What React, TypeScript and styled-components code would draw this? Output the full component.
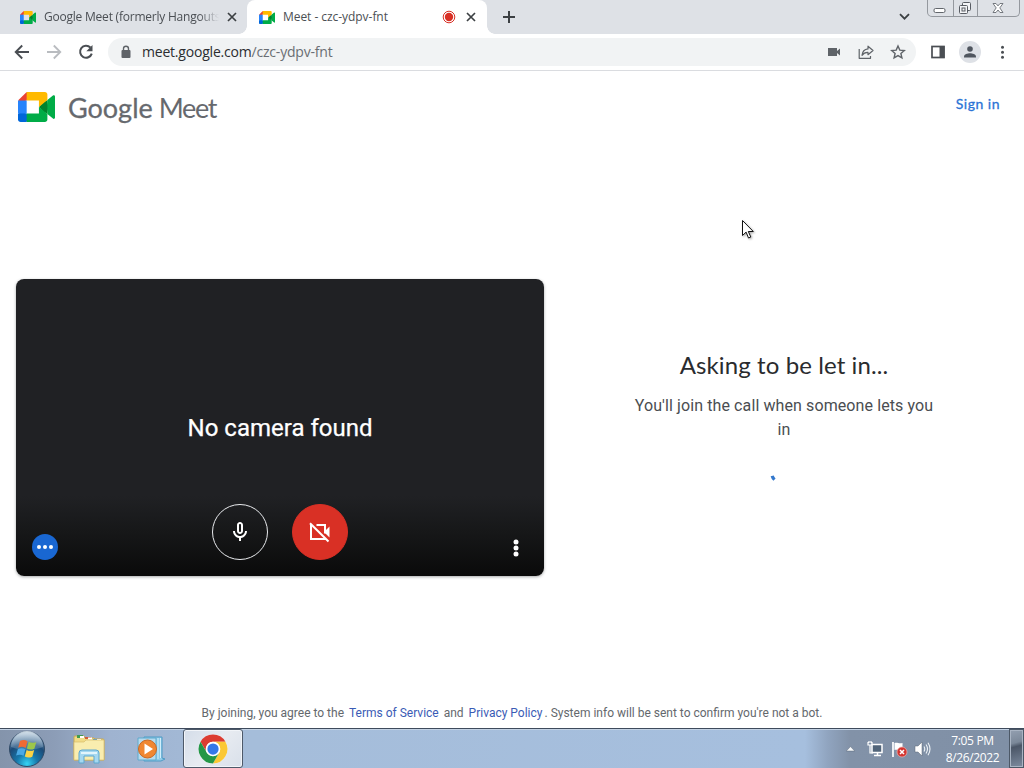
import React from "react";
import styled, { createGlobalStyle } from "styled-components";

const GlobalStyle = createGlobalStyle`
  * { box-sizing: border-box; }
  html, body { margin: 0; padding: 0; overflow: hidden; background: #fff; }
  svg { display: block; flex: none; }
`;

const uiFont = `"Open Sans", "Noto Sans", sans-serif`;
const brandFont = `Lato, "Open Sans", sans-serif`;
const bodyFont = `Roboto, "Liberation Sans", sans-serif`;

const Screen = styled.div`
  position: relative;
  width: 1024px;
  height: 768px;
  display: flex;
  flex-direction: column;
  overflow: hidden;
  background: #fff;
`;

/* ---------- tab strip ---------- */
const TabStrip = styled.div`
  height: 34px;
  display: flex;
  background: #dee1e6;
  font: 12px ${uiFont};
  color: #4b4f54;
`;
const Tab = styled.div<{ $active?: boolean }>`
  position: relative;
  width: ${(p) => (p.$active ? 240 : 247)}px;
  height: 34px;
  padding: 0 ${(p) => (p.$active ? 11 : 10)}px 0 ${(p) => (p.$active ? 12 : 20)}px;
  display: flex;
  align-items: center;
  background: ${(p) => (p.$active ? "#fff" : "transparent")};
  border-radius: ${(p) => (p.$active ? "8px 8px 0 0" : "0")};
  &::before, &::after {
    content: "";
    display: ${(p) => (p.$active ? "block" : "none")};
    position: absolute;
    bottom: 0;
    width: 8px;
    height: 8px;
  }
  &::before { left: -8px; background: radial-gradient(circle at 0 0, transparent 7.5px, #fff 8px); }
  &::after { right: -8px; background: radial-gradient(circle at 100% 0, transparent 7.5px, #fff 8px); }
`;
const TabTitle = styled.span<{ $fade?: boolean; $spacing: number }>`
  flex: 1;
  margin-left: 8px;
  overflow: hidden;
  white-space: nowrap;
  line-height: 18px;
  letter-spacing: ${(p) => p.$spacing}px;
  ${(p) => p.$fade && "mask-image: linear-gradient(90deg, #000 155px, transparent 175px);"}
`;
const TabClose = styled.span<{ $gap: number }>`
  margin-left: ${(p) => p.$gap}px;
`;
const NewTab = styled.div`
  flex: 1;
  padding: 10px 0 0 15px;
`;
const Chevron = styled.div`
  padding: 13px 17px 0 0;
`;
const WindowButtons = styled.div`
  width: 93px;
  height: 17px;
  margin-right: 4px;
  display: flex;
  border: 1px solid #94989e;
  border-top: 0;
  border-radius: 0 0 5px 5px;
`;
const WindowButton = styled.div<{ $w: number }>`
  width: ${(p) => p.$w}px;
  padding-right: 1px;
  display: flex;
  justify-content: center;
  & + & { border-left: 1px solid #94989e; }
`;

/* ---------- toolbar ---------- */
const Toolbar = styled.div`
  height: 37px;
  display: flex;
  align-items: center;
  padding: 0 0 1px 14px;
  border-bottom: 1px solid #dadce0;
`;
const NavButton = styled.div`
  width: 32px;
  svg { width: 16px; height: 16px; }
`;
const AddressBar = styled.div`
  width: 808px;
  height: 28px;
  margin-left: -2px;
  border-radius: 14px;
  background: #f1f3f4;
  display: flex;
  align-items: center;
  padding: 0 10px 0 12px;
  font: 14px ${uiFont};
  color: #6a6e73;
`;
const Url = styled.div`
  flex: 1;
  margin-left: 10px;
  letter-spacing: -0.2px;
  line-height: 20px;
  b { font-weight: 400; color: #2b2d30; }
`;
const AddressActions = styled.div`
  display: flex;
  gap: 16px;
`;
const ToolbarEnd = styled.div`
  display: flex;
  align-items: center;
  gap: 13px;
  padding-left: 14px;
`;
const Avatar = styled.div`
  width: 22px;
  height: 22px;
  border-radius: 50%;
  background: #dee1e6;
  display: grid;
  place-items: center;
`;

/* ---------- page ---------- */
const Page = styled.div`
  height: 657px;
  display: flex;
  flex-direction: column;
  background: #fff;
`;
const Header = styled.header`
  height: 72px;
  display: flex;
  align-items: center;
  padding: 0 24px 0 18px;
  font-family: ${brandFont};
`;
const Wordmark = styled.div`
  flex: 1;
  margin: 2px 0 0 13px;
  font-size: 27px;
  line-height: 32px;
  color: #66696e;
  white-space: nowrap;
`;
const Google = styled.span`
  -webkit-text-stroke: 0.3px #66696e;
`;
const Meet = styled.span`
  margin-left: 6px;
  letter-spacing: -1.4px;
`;
const SignIn = styled.a`
  font-size: 14px;
  font-weight: 400;
  line-height: 20px;
  letter-spacing: 0.5px;
  -webkit-text-stroke: 0.3px #2b73d6;
  margin-bottom: 6px;
  color: #2b73d6;
`;
const Lobby = styled.main`
  height: 297px;
  margin-top: 136px;
  padding: 0 16px;
  display: flex;
`;
const Preview = styled.section`
  width: 528px;
  height: 297px;
  border-radius: 8px;
  background: linear-gradient(180deg, #202124 0, #202124 217px, #161718 254px, #0a0a0a 297px);
  box-shadow: 0 1px 3px rgba(60, 64, 67, 0.45);
  display: flex;
  flex-direction: column;
  justify-content: space-between;
`;
const PreviewMessage = styled.div`
  padding-top: 133px;
  text-align: center;
  font: 400 24px/32px ${bodyFont};
  -webkit-text-stroke: 0.25px #fff;
  color: #fff;
`;
const Controls = styled.div`
  display: flex;
  align-items: flex-end;
  justify-content: space-between;
  padding: 0 16px 16px;
`;
const CallButtons = styled.div`
  display: flex;
  gap: 24px;
`;
const RoundButton = styled.div<{ $off?: boolean }>`
  width: 56px;
  height: 56px;
  border-radius: 50%;
  border: 1px solid ${(p) => (p.$off ? "#d93025" : "#e8eaed")};
  background: ${(p) => (p.$off ? "#d93025" : "transparent")};
  display: grid;
  place-items: center;
`;
const EffectsBadge = styled.div`
  width: 26px;
  height: 26px;
  border-radius: 50%;
  background: #1967d2;
  display: grid;
  place-items: center;
`;
const MoreOptions = styled.div`
  width: 26px;
  padding-right: 2px;
  margin-right: -2px;
  margin-left: 2px;
  display: grid;
  place-items: center;
`;
const Waiting = styled.section`
  width: 304px;
  margin-left: 88px;
  padding-top: 70px;
  display: flex;
  flex-direction: column;
  align-items: center;
  text-align: center;
`;
const WaitingTitle = styled.h1`
  margin: 0;
  font: 400 24px/32px ${brandFont};
  letter-spacing: 0.1px;
  color: #2a2b2e;
  white-space: nowrap;
`;
const WaitingText = styled.p`
  margin: 13px 0 0;
  font: 400 16px/24px ${bodyFont};
  letter-spacing: 0.1px;
  color: #4a4d51;
`;
const Spinner = styled.div`
  margin: 32px 22px 0 0;
`;
const Legal = styled.footer`
  margin-top: 129px;
  text-align: center;
  font: 400 12px/16px ${bodyFont};
  color: #64686d;
  white-space: nowrap;
`;
const LegalLink = styled.a`
  margin: 0 2px;
  color: #3a5bb5;
`;
const Pointer = styled.div`
  position: absolute;
  left: 741px;
  top: 219px;
  svg { filter: drop-shadow(1px 1px 1px rgba(0, 0, 0, 0.35)); }
`;

/* ---------- taskbar ---------- */
const Taskbar = styled.div`
  height: 40px;
  display: flex;
  align-items: center;
  border-top: 1px solid #3e4a5c;
  box-shadow: inset 0 1px 0 #c3d2e4;
  background: linear-gradient(90deg, #8494ab 0, #8c9db7 55px, #9fb3d0 110px, #a5bdda 250px, #a6bfde 805px, #90a4bf 828px, #8292a8 850px, #8090a6 1010px);
`;
const TaskItem = styled.div<{ $w: number; $open?: boolean; $trail?: number }>`
  width: ${(p) => p.$w}px;
  height: 39px;
  padding-right: ${(p) => p.$trail ?? 0}px;
  display: grid;
  place-items: center;
  border: ${(p) => (p.$open ? "1px solid #4d5969" : "0")};
  border-radius: 3px;
  background: ${(p) => (p.$open ? "linear-gradient(135deg, #d4dde9, #e7ebf1 50%, #d9e0ea)" : "transparent")};
  box-shadow: ${(p) => (p.$open ? "inset 0 0 0 1px #f2f5f9" : "none")};
`;
const Tray = styled.div`
  margin-left: auto;
  display: flex;
  align-items: center;
`;
const TrayIcon = styled.div<{ $gap: number }>`
  margin-right: ${(p) => p.$gap}px;
`;
const Clock = styled.div`
  width: 73px;
  text-align: center;
  font: 12px/17px ${uiFont};
  letter-spacing: -0.35px;
  color: #fff;
`;
const ShowDesktop = styled.div`
  width: 15px;
  height: 39px;
  border: 1px solid #4c5867;
  background: linear-gradient(165deg, #94a0b1, #7b8899 35%, #4b5667 45%, #7d8b9f);
  box-shadow: inset 0 0 0 1px #a9b4c3;
`;

const MeetLogo = ({ w, h }: { w: number; h: number }) => (
  <svg width={w} height={h} viewBox="0 0 87.5 72" preserveAspectRatio="none">
    <path fill="#00832d" d="M49.5 36l8.53 9.75 11.47 7.33 2-17.02-2-16.64-11.69 6.44z" />
    <path fill="#0066da" d="M0 51.5V66c0 3.315 2.685 6 6 6h14.5l3-10.96-3-9.54-9.95-3z" />
    <path fill="#e94235" d="M20.5 0L0 20.5l10.55 3 9.95-3 2.95-9.41z" />
    <path fill="#2684fc" d="M20.5 20.5H0v31h20.5z" />
    <path fill="#00ac47" d="M82.6 8.68L69.5 19.42v33.66l13.16 10.79c1.97 1.54 4.85.135 4.85-2.37V11c0-2.535-2.945-3.925-4.91-2.32zM49.5 36v15.5h-29V72h43c3.315 0 6-2.685 6-6V53.08z" />
    <path fill="#ffba00" d="M63.5 0h-43v20.5h29V36l20-16.57V6c0-3.315-2.685-6-6-6z" />
  </svg>
);

const CloseIcon = () => (
  <svg width="10" height="10" viewBox="0 0 10 10" fill="none" stroke="#3c4043" strokeWidth="1.7">
    <path d="M1 1l8 8M9 1l-8 8" />
  </svg>
);

const RecordingIcon = () => (
  <svg width="14" height="14" viewBox="0 0 14 14">
    <circle cx="7" cy="7" r="5.8" fill="none" stroke="#d93025" strokeWidth="1" />
    <circle cx="7" cy="7" r="4.2" fill="#d93025" />
  </svg>
);

const ChromeTabs = () => (
  <TabStrip>
    <Tab>
      <MeetLogo w={16} h={13} />
      <TabTitle $fade $spacing={-0.22}>Google Meet (formerly Hangouts</TabTitle>
      <TabClose $gap={3}><CloseIcon /></TabClose>
    </Tab>
    <Tab $active>
      <MeetLogo w={16} h={13} />
      <TabTitle $spacing={-0.05}>Meet - czc-ydpv-fnt</TabTitle>
      <RecordingIcon />
      <TabClose $gap={10}><CloseIcon /></TabClose>
    </Tab>
    <NewTab>
      <svg width="14" height="14" viewBox="0 0 14 14" stroke="#3c4043" strokeWidth="2"><path d="M7 1v12M1 7h12" /></svg>
    </NewTab>
    <Chevron>
      <svg width="11" height="8" viewBox="0 0 11 8" fill="none" stroke="#3c4043" strokeWidth="1.8"><path d="M1 1.2l4.5 4.5L10 1.2" /></svg>
    </Chevron>
    <WindowButtons>
      <WindowButton $w={25}>
        <svg width="13" height="15" viewBox="0 0 13 15"><rect x="1" y="8.5" width="11" height="4" rx="1.5" fill="#fff" stroke="#62666c" /></svg>
      </WindowButton>
      <WindowButton $w={25}>
        <svg width="14" height="16" viewBox="0 0 14 16" fill="#f4f5f7" stroke="#585c63">
          <rect x="4.5" y="2.5" width="8" height="8" rx="1" />
          <rect x="1.5" y="5.5" width="8" height="8" rx="1" />
          <rect x="4" y="8" width="3" height="3" />
        </svg>
      </WindowButton>
      <WindowButton $w={42}>
        <svg width="12" height="15" viewBox="0 0 12 15">
          <path d="M1 3.5h3l2 2.4 2-2.4h3L7.8 7.9l3.2 4.6H8L6 10l-2 2.5H1l3.2-4.6z" fill="#fff" stroke="#686c73" strokeWidth=".9" />
        </svg>
      </WindowButton>
    </WindowButtons>
  </TabStrip>
);

const ChromeToolbar = () => (
  <Toolbar>
    <NavButton>
      <svg viewBox="0 0 16 16" fill="none" stroke="#4a4e53" strokeWidth="1.9"><path d="M15 8H2M8.2 1.5L1.7 8l6.5 6.5" /></svg>
    </NavButton>
    <NavButton>
      <svg viewBox="0 0 16 16" fill="none" stroke="#b9bcc0" strokeWidth="1.8"><path d="M1 8h13M7.8 1.5L14.3 8l-6.5 6.5" /></svg>
    </NavButton>
    <NavButton>
      <svg viewBox="0 0 16 16"><path d="M12.4 3.5A6 6 0 1 0 13.8 9.6" fill="none" stroke="#4a4e53" strokeWidth="2" /><path d="M14.5 1v6.2H8.3z" fill="#4a4e53" /></svg>
    </NavButton>
    <AddressBar>
      <svg width="12" height="14" viewBox="0 0 12 14"><rect x="1.5" y="5" width="9" height="8" rx="1" fill="#5f6368" /><path d="M3.5 5.5V3.7a2.5 2.5 0 0 1 5 0v1.8" fill="none" stroke="#5f6368" strokeWidth="1.4" /></svg>
      <Url><b>meet.google.com</b>/czc-ydpv-fnt</Url>
      <AddressActions>
        <svg width="16" height="16" viewBox="0 0 16 16"><path d="M2 4h9v3l3-2.6v7.2L11 9v3H2z" fill="#5f6368" /></svg>
        <svg width="16" height="16" viewBox="0 0 16 16" fill="none" stroke="#5f6368" strokeWidth="1.2" strokeLinejoin="round"><path d="M1.2 5v9.3h11.3V12M10 2.2l5 4.3-5 4.2V8.4C7.2 8.3 5.5 9.2 4 11.3c.4-3.6 2.4-6 6-6.4z" /></svg>
        <svg width="16" height="16" viewBox="0 0 16 16" fill="none" stroke="#5f6368" strokeWidth="1.4"><path d="M8 2l1.8 4.1 4.5.4-3.4 3 1 4.4L8 11.6l-3.9 2.3 1-4.4-3.4-3 4.5-.4z" /></svg>
      </AddressActions>
    </AddressBar>
    <ToolbarEnd>
      <svg width="16" height="16" viewBox="0 0 16 16"><rect x="2" y="2.5" width="12" height="11" fill="none" stroke="#4a4e53" strokeWidth="1.7" /><path d="M9.5 2h5v12h-5z" fill="#4a4e53" /></svg>
      <Avatar>
        <svg width="14" height="14" viewBox="0 0 14 14" fill="#50565f"><circle cx="7" cy="4" r="2.8" /><path d="M1 12.6v-1.2C1 9.3 4.6 8.2 7 8.2s6 1.1 6 3.2v1.2z" /></svg>
      </Avatar>
      <svg width="16" height="16" viewBox="0 0 16 16" fill="#4a4e53"><circle cx="8.5" cy="3.2" r="1.5" /><circle cx="8.5" cy="8.2" r="1.5" /><circle cx="8.5" cy="13.2" r="1.5" /></svg>
    </ToolbarEnd>
  </Toolbar>
);

const MeetPage = () => (
  <Page>
    <Header>
      <MeetLogo w={37} h={30} />
      <Wordmark><Google>Google</Google><Meet>Meet</Meet></Wordmark>
      <SignIn>Sign in</SignIn>
    </Header>
    <Lobby>
      <Preview>
        <PreviewMessage>No camera found</PreviewMessage>
        <Controls>
          <EffectsBadge>
            <svg width="16" height="4" viewBox="0 0 16 4" fill="#fff"><circle cx="2" cy="2" r="2" /><circle cx="8" cy="2" r="2" /><circle cx="14" cy="2" r="2" /></svg>
          </EffectsBadge>
          <CallButtons>
            <RoundButton>
              <svg width="24" height="24" viewBox="0 0 24 24" fill="#fff"><path d="M12 14c1.66 0 3-1.34 3-3V5c0-1.66-1.34-3-3-3S9 3.34 9 5v6c0 1.66 1.34 3 3 3zm-1-9c0-.55.45-1 1-1s1 .45 1 1v6c0 .55-.45 1-1 1s-1-.45-1-1V5zm6 6c0 2.76-2.24 5-5 5s-5-2.24-5-5H5c0 3.53 2.61 6.43 6 6.92V21h2v-3.08c3.39-.49 6-3.39 6-6.92h-2z" /></svg>
            </RoundButton>
            <RoundButton $off>
              <svg width="24" height="24" viewBox="0 0 24 24" fill="none" stroke="#fff" strokeWidth="2"><path d="M8.5 5H17v8.5M3 5v14h14.5M2 3.3L20.5 21.5" /><path d="M17 11l4.5-4.5v11L17 13z" fill="#fff" stroke="none" /></svg>
            </RoundButton>
          </CallButtons>
          <MoreOptions>
            <svg width="6" height="24" viewBox="0 0 6 24" fill="#fff"><circle cx="3" cy="6" r="2.5" /><circle cx="3" cy="12" r="2.5" /><circle cx="3" cy="18" r="2.5" /></svg>
          </MoreOptions>
        </Controls>
      </Preview>
      <Waiting>
        <WaitingTitle>Asking to be let in...</WaitingTitle>
        <WaitingText>You'll join the call when someone lets you in</WaitingText>
        <Spinner><svg width="8" height="8" viewBox="0 0 8 8"><path d="M3.2 1.8c.3 1.3 1 2.6 2.3 3.8" fill="none" stroke="#3478cc" strokeWidth="3.2" /></svg></Spinner>
      </Waiting>
    </Lobby>
    <Legal>
      By joining, you agree to the <LegalLink>Terms of Service</LegalLink> and <LegalLink>Privacy Policy</LegalLink>. System info will be sent to confirm you're not a bot.
    </Legal>
  </Page>
);

const StartOrb = () => (
  <svg width="38" height="38" viewBox="0 0 38 38">
    <defs>
      <radialGradient id="orb" cx=".5" cy=".92" r=".85"><stop offset="0" stopColor="#35d4f4" /><stop offset=".35" stopColor="#1778ab" /><stop offset=".7" stopColor="#1c4b78" /><stop offset="1" stopColor="#7897b3" /></radialGradient>
      <linearGradient id="gloss" x2="0" y2="1"><stop offset="0" stopColor="#e5eef5" stopOpacity=".85" /><stop offset="1" stopColor="#a9c1d6" stopOpacity=".2" /></linearGradient>
    </defs>
    <circle cx="19" cy="19" r="17.5" fill="url(#orb)" stroke="#304a66" />
    <path d="M3 17a16 16 0 0 1 32 0c-10 4-22 4-32 0z" fill="url(#gloss)" />
    <path d="M12 11c3-1.5 5-1.2 7.5.2L17.7 18c-2.5-1.4-4.7-1.5-7.5-.3z" fill="#ef6a34" />
    <path d="M20.7 11.8c2.5 1.3 5 1.2 7.6.1L26.4 18.7c-2.6 1.2-5 1.1-7.5-.1z" fill="#9cc64a" />
    <path d="M9.9 19c2.8-1.2 5-1.1 7.5.2l-1.8 6.6c-2.5-1.4-4.8-1.5-7.5-.2z" fill="#4aa9e4" />
    <path d="M18.6 19.9c2.5 1.3 5 1.2 7.6.1l-1.9 6.7c-2.6 1.2-5 1.2-7.5-.1z" fill="#fbd345" />
  </svg>
);

const FolderIcon = () => (
  <svg width="34" height="32" viewBox="0 0 34 32">
    <path d="M2 4q0-1 1-1h9l1 2h9l1 1h8q1 0 1 1v20H2z" fill="#f1db86" stroke="#c7a955" />
    <path d="M5 2h6v3H5z" fill="#3f9b50" /><path d="M13 4h6v2h-6z" fill="#d05c3a" /><path d="M21 6h7v2h-7z" fill="#4c97cc" />
    <path d="M8 3h4v2H8zM16 4.5h4v2h-4zM25 6h4v2h-4z" fill="#fff" />
    <path d="M2 9h10l2-2h18v20H2z" fill="#f9edaf" stroke="#d7bd6b" strokeWidth=".7" />
    <path d="M7 30V20q0-3 3-3h14q3 0 3 3v10h-5v-7H12v7z" fill="#a5d8f0" stroke="#5ca7cf" />
    <path d="M9 20h16" stroke="#e2f5fc" strokeWidth="2" />
  </svg>
);

const MediaIcon = () => (
  <svg width="30" height="28" viewBox="0 0 30 28">
    <path d="M8 2h18v21l3 1-4 2H8z" fill="#8fcbe9" stroke="#4f9bc5" />
    <path d="M22 3v21M24.5 3v20" stroke="#d2effb" />
    <path d="M2 3h18v22H2z" fill="#b7dbee" stroke="#5eaacd" />
    <circle cx="11.5" cy="14" r="9" fill="#f08732" stroke="#c96721" />
    <path d="M8.5 8.5L17 14l-8.5 5.5z" fill="#fff" />
  </svg>
);

const ChromeIcon = () => (
  <svg width="30" height="30" viewBox="0 0 48 48">
    <circle cx="24" cy="24" r="23" fill="#fff" />
    <path d="M4.08 12.5A23 23 0 0 1 43.92 12.5H24A11.5 11.5 0 0 0 14.04 29.75z" fill="#dc3c31" />
    <path d="M43.92 12.5A23 23 0 0 1 24 47L33.96 29.75A11.5 11.5 0 0 0 24 12.5z" fill="#fbc835" />
    <path d="M24 47A23 23 0 0 1 4.08 12.5L14.04 29.75A11.5 11.5 0 0 0 33.96 29.75z" fill="#249747" />
    <circle cx="24" cy="24" r="11.5" fill="#fff" /><circle cx="24" cy="24" r="9" fill="#3578e8" />
  </svg>
);

const WindowsTaskbar = () => (
  <Taskbar>
    <TaskItem $w={54}><StartOrb /></TaskItem>
    <TaskItem $w={70}><FolderIcon /></TaskItem>
    <TaskItem $w={59} $trail={5}><MediaIcon /></TaskItem>
    <TaskItem $w={60} $open><ChromeIcon /></TaskItem>
    <Tray>
      <TrayIcon $gap={11}>
        <svg width="9" height="6" viewBox="0 0 9 6"><path d="M.3 5L4.5.6 8.700 5z" fill="#f8fafc" stroke="#4a5664" strokeWidth=".4" /></svg>
      </TrayIcon>
      <TrayIcon $gap={7}>
        <svg width="18" height="18" viewBox="0 0 18 18">
          <path d="M6 4.5h10v8H6z" fill="#52657a" stroke="#fff" strokeWidth="1.5" />
          <path d="M8 15.5h7M11.5 13v3" stroke="#fff" strokeWidth="1.5" />
          <path d="M2 2v3h4V2M4 5v8h3M3 1v2M5 1v2" fill="none" stroke="#fff" strokeWidth="1.2" />
        </svg>
      </TrayIcon>
      <TrayIcon $gap={6}>
        <svg width="17" height="18" viewBox="0 0 17 18">
          <path d="M2 2v15" stroke="#fff" strokeWidth="1.7" /><path d="M3.5 3c3-1 4 1 8 0v7c-4 1-5-1-8 0z" fill="#fff" />
          <circle cx="11" cy="12" r="5" fill="#d43530" stroke="#f1b5b0" strokeWidth=".7" /><path d="M9 10l4 4M13 10l-4 4" stroke="#fff" strokeWidth="1.5" />
        </svg>
      </TrayIcon>
      <TrayIcon $gap={5}>
        <svg width="17" height="16" viewBox="0 0 17 16">
          <path d="M1 5h3l4-4v14l-4-4H1z" fill="#fff" stroke="#5b6775" strokeWidth=".5" />
          <path d="M10 5.5q1.5 2.5 0 5M12 3.5q3 4.5 0 9M14 1.8q4 6.2 0 12.4" fill="none" stroke="#edf2f6" strokeWidth="1.1" />
        </svg>
      </TrayIcon>
      <Clock>7:05 PM<br />8/26/2022</Clock>
      <ShowDesktop />
    </Tray>
  </Taskbar>
);

export default function App() {
  return (
    <>
      <GlobalStyle />
      <Screen>
        <ChromeTabs />
        <ChromeToolbar />
        <MeetPage />
        <WindowsTaskbar />
        <Pointer>
          <svg width="14" height="21" viewBox="0 0 14 21"><path d="M1.5 1.500v15l3.600-3.400L7.500 19l2.300-1-2.500-5.500H12.300z" fill="#fff" stroke="#111" /></svg>
        </Pointer>
      </Screen>
    </>
  );
}
